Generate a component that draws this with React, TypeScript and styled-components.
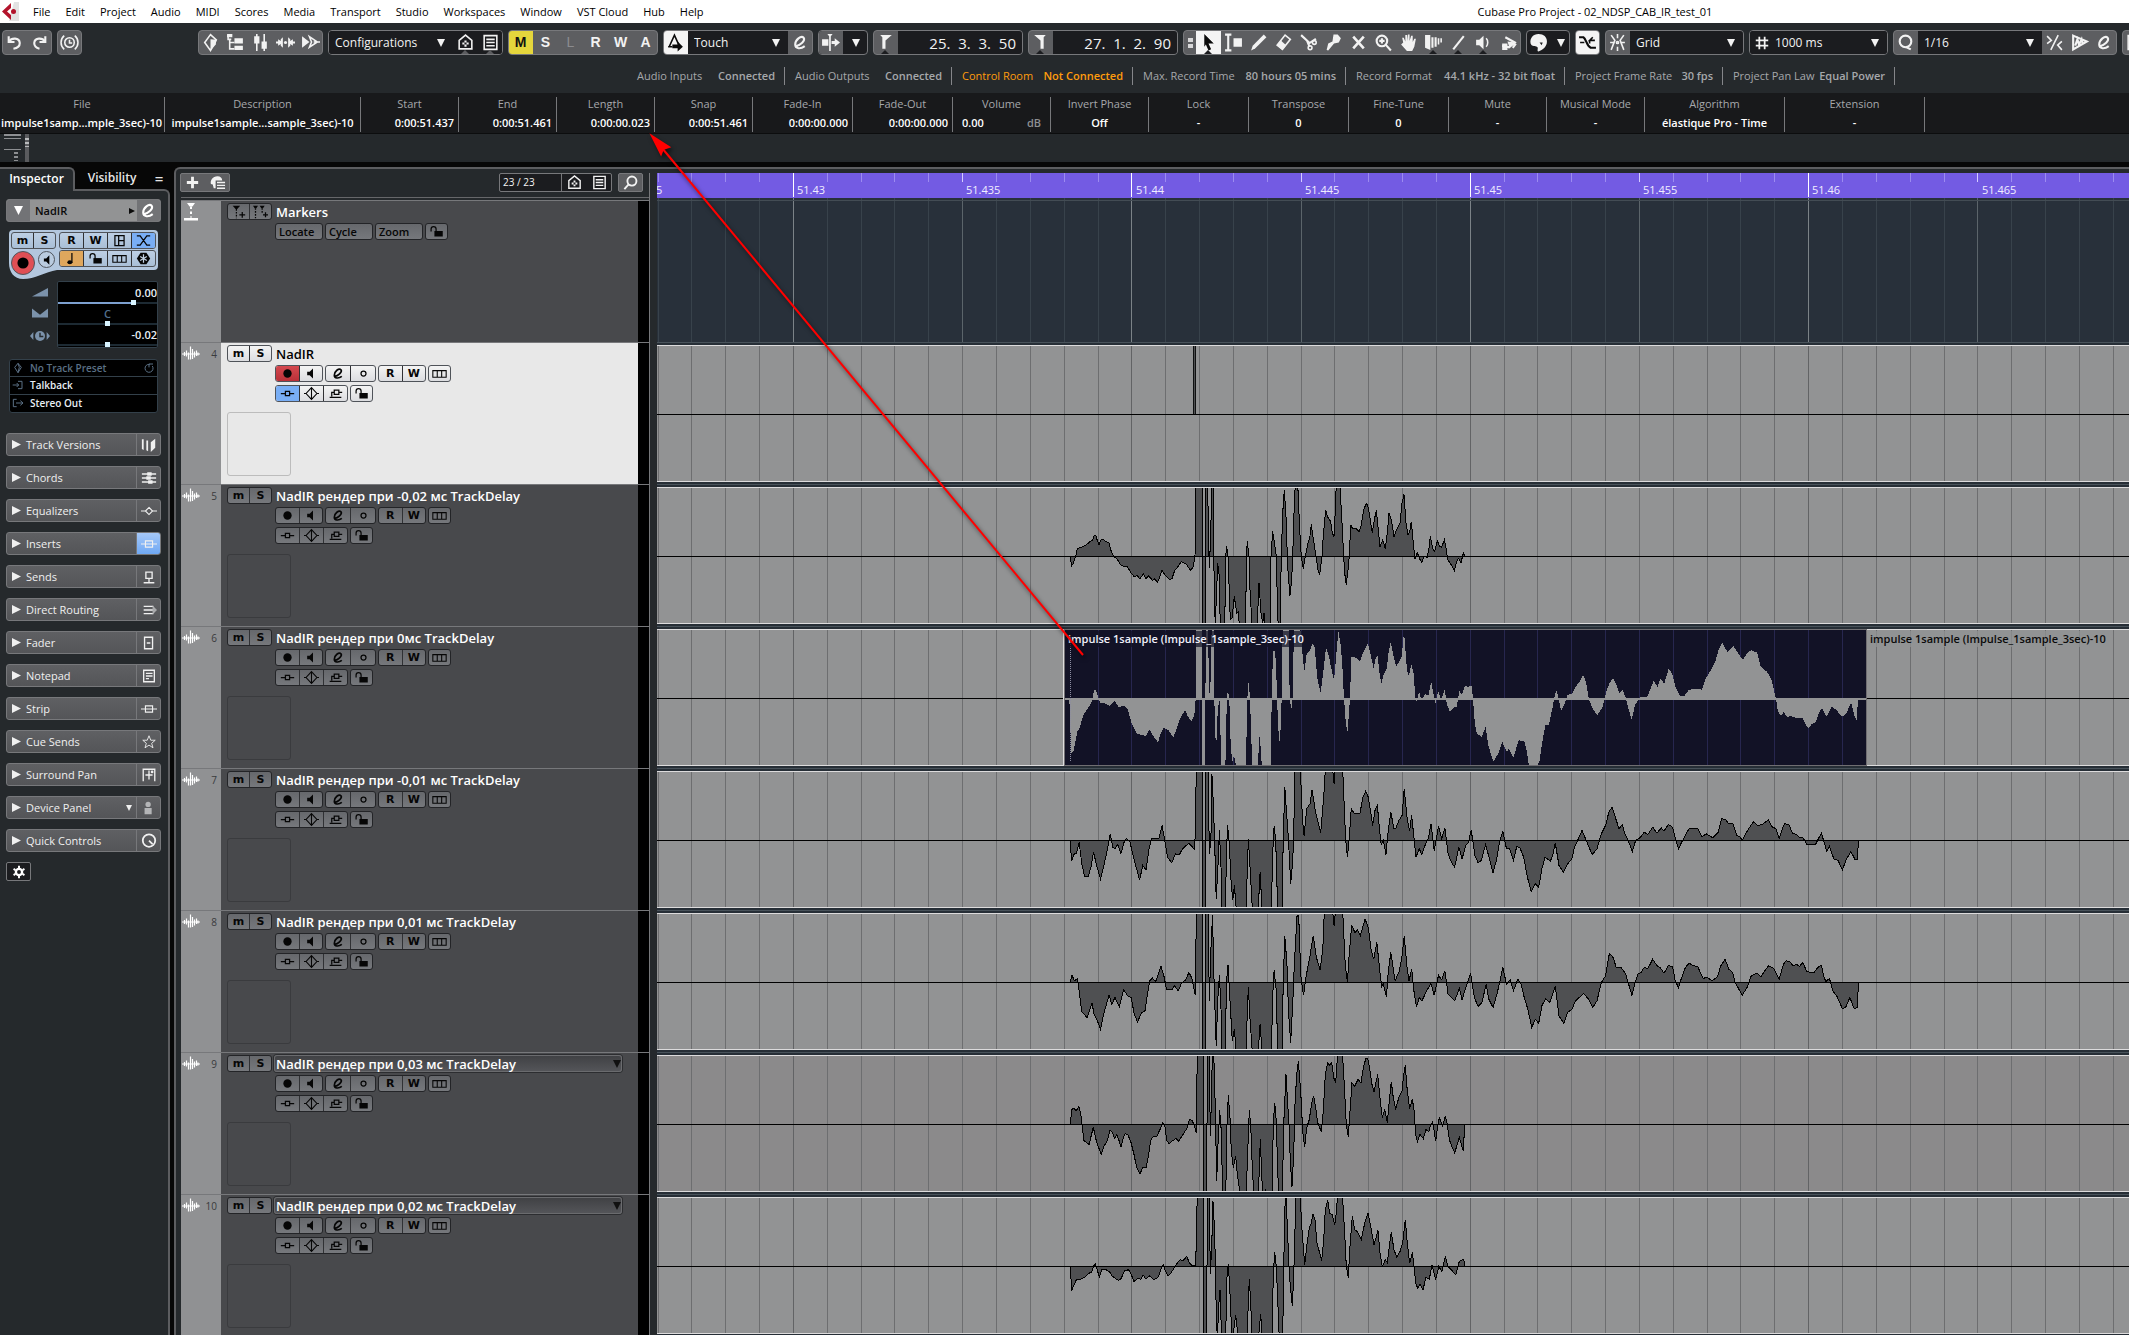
import React from "react";
import styled, { createGlobalStyle, css } from "styled-components";

const UI = `"Open Sans", "Noto Sans", sans-serif`;

const c = {
  panel: "#25292c",
  dark: "#1b1c1f",
  info: "#18191b",
  button: "#5d5e61",
  edge: "#77787b",
  rail: "#909193",
  body: "#48494c",
  clip: "#929394",
  grid: "#6d6e70",
  ruler: "#735be3",
  lane: "#28303a",
  accent: "#79aef5",
};

const Global = createGlobalStyle`
  *, *::before, *::after { box-sizing: border-box; }
  body { margin: 0; background: #070707; font-family: ${UI}; font-size: 11px; line-height: 14px; overflow: hidden; }
  button, input, select { font: inherit; color: inherit; margin: 0; padding: 0; border: 0; background: none; border-radius: 0; }
  svg { display: block; flex: none; }
`;

/* ---------- icons ---------- */

type IconDef = React.ReactNode;
const line = { fill: "none", stroke: "currentColor", strokeWidth: 1.5 };
const thin = { fill: "none", stroke: "currentColor", strokeWidth: 1 };
const solid = { fill: "currentColor" };

const icons: Record<string, IconDef> = {
  undo: <g {...line} strokeWidth={2}><path d="M3.5 3v5.5H9" /><path d="M4 8C6 4.500 13.500 4 14 9.500 14 13 11 14.500 8 15" /></g>,
  redo: <g {...line} strokeWidth={2}><path d="M14.500 3v5.500H9" /><path d="M14 8C12 4.500 4.500 4 4 9.500 4 13 7 14.500 9 15" /></g>,
  clock: <g {...line}><circle cx="9" cy="9" r="4.500" /><path d="M9 6.500V9.500h2.500M4 2.500C0 6 0 12 4 15.500M14 2.500c4 3.500 4 9.500 0 13" /></g>,
  diamond: <g><path {...line} d="M9 1.500 14.500 6.500 9 16.500 3.500 9 9 1.500Z" /><path {...solid} d="M9 6 14.500 6.500 14 11 9 16.500Z" /></g>,
  tree: <g><path {...line} d="M2 2v4h3M3.500 6v9H8M3.500 9H8" /><path {...solid} d="M1 1h5v3H1zM8 5h8v5H8zM8 12h8v4H8z" /></g>,
  mixer: <g><path {...line} d="M5.500 1v16M12.500 1v16" /><path {...solid} d="M3 3h5v7H3zM10 8h5v7h-5z" /></g>,
  spread: <g {...solid}><circle cx="9" cy="9" r="1.500" /><path d="M6.500 4v10L4.500 12V10.500L2 12V10H0V8H2V6l2.500 1.500V6zM11.500 4v10l2-2v-1.500L16 12v-2h2V8h-2V6l-2.500 1.500V6z" /></g>,
  ffwd: <g><path {...solid} d="M1 3l7 5.500L1 14z" /><path {...line} d="M8 3.500 15.500 8.500 8 13.500 10 8.500zM12 8.500h6" /></g>,
  home: <g {...line}><path d="M3 15V7L9 2l6 5v8z" /><path d="M9 7v2M9 11v2M6 10h2M10 10h2" strokeWidth={2} /></g>,
  list: <g {...line}><path d="M3 2.500h12v13H3z" /><path d="M5 6h8M5 9h8M5 12h8" /></g>,
  metro: <g><path {...line} d="M3 13 8 2l4 9M2 13h4" /><path {...solid} d="M6 11h5V8l5 5-5 4.500v-3H6z" /></g>,
  e: <g fill="none" stroke="currentColor" strokeWidth={2}><path d="M4.500 12.500C8 12 14 7.500 12 4.500 9.500 2 4 6.500 4 11c0 4 5 4.500 9 1.500" /></g>,
  autoscroll: <g {...solid}><path d="M1 6h6v6H1zM10 7.500h3V5l5 4-5 4v-2.500h-3zM6 1h5L9.300 3v14h-1.600V3z" /></g>,
  locL: <path {...solid} d="M4 2h11L9 7v8H6V4z" />,
  locR: <path {...solid} d="M14 2H3l6 5v8h3V4z" />,
  pointer: <path {...solid} d="M5 1l9 9h-5l2.500 5.500-2.500 1L6.500 11 5 13z" />,
  range: <g><path {...line} d="M1 1.500h6M1 16.500h6M4 2v14" strokeWidth={2} /><path {...solid} d="M9 5h8v8H9z" /></g>,
  pencil: <path {...solid} d="M14 1.500l2.500 2.500L6 14.500 2 16.500 3.500 12z" />,
  eraser: <g><path {...line} d="M10.500 2 15.500 6 8 15.500 3 11.500z" /><path {...solid} d="M6.500 7 11.500 11.500 8 16 2.500 11.500z" /></g>,
  scissors: <g {...line}><path d="M2 2l8 7.500 6-4M7.500 7 10 13" strokeWidth={2} /><circle cx="14.500" cy="9" r="1.800" /><circle cx="10.500" cy="14" r="1.800" /></g>,
  glue: <path {...solid} d="M9 1.500h4L16 5l-2 4-4.500 1L4 16.500 2.500 16 4 10 8 8z" />,
  cross: <path {...line} strokeWidth={2.500} d="M4 3.500 14 14.500M14 3.500 4 14.500" />,
  zoomin: <g {...line} strokeWidth={2}><circle cx="7.500" cy="7.500" r="5" /><path d="M11 11l5 5.500M5 7.500h5M7.500 5v5" /></g>,
  hand: <path {...solid} d="M4 9 3 4.500h1.500L6 8V2h1.700v5.500L8.500 1.500H10V7.500L11.500 2.500H13V8.500L14.500 5.500H16L14.500 13 12.500 17H7.500L2 11z" />,
  comp: <g {...solid}><path d="M1 2h5v14L1 14zM7 4h2v10H7zM10 4h2v9h-2zM13 5h1.500v6H13zM15.500 5H17v4h-1.500z" /></g>,
  lineTool: <path {...line} strokeWidth={2} d="M4 15.500 14 3" />,
  speaker: <g><path {...solid} d="M2 6.500h3l4-4v13l-4-4H2z" /><path {...line} d="M11.500 5c2 2 2 6 0 8" /></g>,
  fill: <g><path {...line} d="M6 4l9 5-5.500 4.500L3 12M13 14l3-4" strokeWidth={2} /><path {...solid} d="M3 10h5v6H3zM8 8l8 1-6 5z" /></g>,
  palette: <path {...solid} d="M9 1c5 0 8 3 8 7 0 5-4 8-8 9.500C7 17 9.500 14 7.500 13 6 12 3 13.500 1.500 10 .5 5 4 1 9 1zM10 9l3 0-1 2.500z" fillRule="evenodd" />,
  snap: <g><path {...line} strokeWidth={2} d="M1 4h4c3 2 3 8 7 10h5" /><path {...line} d="M2 9h4M16 7h-5l3-3M11 7v3" /></g>,
  star: <g {...line}><path d="M9 1v4M9 13v4M3 2l3.500 5L3 16M15 2l-3.500 5L15 16M2 9h4.500M11.500 9H16" /><circle cx="9" cy="9" r="1" /></g>,
  hash: <path {...line} strokeWidth={2} d="M6 2v14M12 2v14M2 6h14M2 12h14" />,
  q: <g {...line} strokeWidth={2}><circle cx="9" cy="8" r="5.500" /><path d="M9 13l5 2.500" /></g>,
  iter: <g {...line}><path d="M12.500 2 5.500 16M2 3l4 4-4 3M16 8l-4 3.500 4 4.500" /></g>,
  warp: <g {...line} strokeWidth={2}><path d="M3 2.500 16 8 3 15.500zM5 12l2-6 1.500 5L11 6l1 4" /></g>,
  plus: <path {...line} strokeWidth={3} d="M9 3v12M3 9h12" />,
  addPreset: <g><path {...solid} d="M9 2.500c3 0 5 2 5 4.500H7v8H5l-1-4-2-.5C1 7 4 2.500 9 2.500z" /><path {...line} d="M8.500 9H17M8.500 12H17M8.500 15H17" /></g>,
  search: <g {...line} strokeWidth={2}><circle cx="10.500" cy="7.500" r="4.800" /><path d="M7 11l-4.500 5" /></g>,
  versions: <path {...solid} d="M1 2.500h2v12l-2-1zM6 4h2v12l-2-1zM11 6l5-4v10l-5 5z" />,
  chords: <g><path {...line} d="M1 4.500h16M1 9h16M1 13.500h16" /><path {...solid} d="M7 2.500h5v4H7zM6 7h5v4H6zM8 11.500h5v4H8z" /></g>,
  eq: <path {...thin} strokeWidth={1.300} d="M0 9h5M13 9h5M9 5l4 4-4 4-4-4z" />,
  insert: <path {...thin} strokeWidth={1.300} d="M0 9h18M5 5.500h8v7H5z" />,
  send: <path {...line} d="M5.500 3.500h7v7h-7zM9 10.500v5M3 15.500h12" />,
  routing: <g><path {...line} d="M3 5h11M3 9h11M3 13h11" /><path d="M13 4l5 5-5 5z" fill="#a9aaac" /></g>,
  fader: <path {...line} d="M4 2.500h9v13H4zM6.500 9h4" />,
  notepad: <path {...line} d="M3 2.500h12v13H3zM5.500 6H13M5.500 9H13M5.500 12H9" />,
  cue: <path {...thin} d="M9 2l2 5h5l-4 3.500 1.500 5L9 12.500 4.500 15.500 6 10.500 2 7h5z" />,
  surround: <g><path {...line} d="M2.500 16V2.500h13V16M5 9h8M9 4v10" /><circle cx="12.500" cy="5.500" r="1.500" {...solid} /></g>,
  device: <g fill="#b4b5b7"><circle cx="8" cy="5" r="3" /><path d="M4 9h8v7H4z" /></g>,
  quick: <g {...line} strokeWidth={2}><circle cx="9" cy="8.500" r="7" /><path d="M9 8.500l4 4" /></g>,
  gear: <g><circle cx="9" cy="9" r="4" {...line} strokeWidth={3} /><path {...line} strokeWidth={2.500} d="M9 1v3M9 14v3M2 5l2.500 1.500M13.500 11.500 16 13M2 13l2.500-1.500M13.500 6.500 16 5" /></g>,
  rec: <circle cx="9" cy="9" r="5" {...solid} />,
  mon: <path {...solid} d="M5 7h3l4-4v12l-4-4H5z" />,
  ring: <circle cx="9" cy="9" r="3" {...line} />,
  lanes: <path {...thin} strokeWidth={1.300} d="M1 5.500h16v8H1zM6.300 5.500v8M11.600 5.500v8" />,
  chIns: <path {...line} d="M1 9h5.500M11.500 9H17M6.500 6.500h5v5h-5z" />,
  chEq: <path {...thin} strokeWidth={1.300} d="M9 2l6.500 7L9 16 2.500 9zM9 2v14M0 9h3M15 9h3" />,
  chSend: <path {...line} d="M7.500 5h5.500v5H7.500zM13 7.500h4M7.500 7.500h-3v5M2 13.500h14" />,
  lock: <g><path {...line} d="M2.500 9V6c0-4 6-4 6 0v4" /><path {...solid} d="M6.500 8.500h10v6.500h-10z" /></g>,
  marker: <g><path {...solid} d="M2 2h9L7.500 6H5.500z" /><path {...line} strokeDasharray="2 1.500" d="M6.500 6v11" /><path {...line} d="M10 13h7M13.500 9.500v7" /></g>,
  markers: <g><path {...solid} d="M0 2h6L4 5H2zM8 2h6l-2 3h-2z" /><path {...line} strokeDasharray="2 1.500" d="M3 5v12M11 5v7" /><path {...line} d="M12 13h6M15 10v6" /></g>,
  markerTrack: <g><path {...solid} d="M5 0h8L10.500 3.500h-3zM2 15h14v2.500H2z" /><path {...line} strokeWidth={2} strokeDasharray="2.500 2.500" d="M9 3.500v11" /></g>,
  grid4: <path {...line} d="M3.500 3h11v12h-11zM8 3v12M8 9h6.500" />,
  xfade: <path {...line} d="M1 3.500h4l8 11h4M1 14.500h4l8-11h4" />,
  note: <g><ellipse cx="7" cy="13.500" rx="3" ry="2.500" {...solid} /><path {...line} d="M9.500 14V2.500" /></g>,
  freeze: <g><path {...solid} d="M5.500 2h7L17 9l-4.500 7h-7L1 9z" /><path stroke="#c3d2e2" strokeWidth={1.500} d="M9 4v10M5 6.500l8 5M13 6.500l-8 5" /></g>,
  volume: <path {...solid} d="M0 14 18 4.500V14z" />,
  pan: <path {...solid} d="M0 4l9 7 9-7v10H0z" />,
  delay: <g {...solid}><path d="M0 9l3-3.500v7zM18 9l-3-3.500v7z" /><circle cx="9" cy="9" r="4.500" /><path d="M9 6v3.500h3" stroke={c.panel} strokeWidth={1.300} fill="none" /></g>,
  preset: <path {...line} d="M9 2l5 6-5 8-5-8zM9 2l2 6-2 8" />,
  inPort: <path {...line} d="M1 9h9M7 6l3 3-3 3M9 3.500h6v11H9" />,
  outPort: <path {...line} d="M7 3.500H2v11h5M6 9h10M12.500 5.500l4 3.500-4 3.500" />,
  reload: <g {...line}><path d="M14 6a6 6 0 1 1-4-2.500" /><path d="M9 8V3h6" /></g>,
  wave: <path fill="none" stroke="currentColor" strokeWidth={1.200} d="M0 9h18M2.500 7v4M4.500 5.500v6M6.500 7.500v7M8.500 1.500v13M10.500 4v10M12.500 6.500v6M14.500 5.500v5.500M16 7.500v3" />,
};

const Icon = ({ name, size = 16 }: { name: string; size?: number }) => (
  <svg width={size} height={size} viewBox="0 0 18 18" aria-hidden="true">{icons[name]}</svg>
);

const Tri = ({ dir, size = 8 }: { dir: "down" | "right"; size?: number }) => (
  <svg width={size} height={size} viewBox="0 0 8 8" aria-hidden="true">
    <path d={dir === "down" ? "M0 0h8L4 8z" : "M0 0v8l8-4z"} fill="currentColor" />
  </svg>
);

/* ---------- page frame ---------- */

const Page = styled.div`
  display: flex;
  flex-direction: column;
  height: 100vh;
  overflow: hidden;
  position: relative;
`;

const MenuBar = styled.header`
  display: grid;
  grid-template-columns: 69.4% 1fr;
  align-items: center;
  height: 23px;
  background: #fff;
  color: #000;
`;

const Menu = styled.nav`
  display: flex;
  align-items: center;
`;

const Logo = styled.svg`
  margin-right: 7px;
`;

const MenuItem = styled.button`
  padding: 0 8px 0 7px;
  height: 23px;
`;

const Title = styled.h1`
  margin: 0;
  font-size: 11px;
  font-weight: 400;
  white-space: nowrap;
`;

const Toolbar = styled.div`
  display: flex;
  flex: none;
  gap: 5px;
  height: 37px;
  padding: 7px 0 5px 2px;
  background: ${c.panel};
  color: #f2f2f2;
  overflow: hidden;
`;

const Spacer = styled.div`
  width: 106px;
  flex: none;
`;

const Group = styled.div<{ $dark?: boolean }>`
  display: flex;
  flex: none;
  height: 25px;
  border: 1px solid ${c.edge};
  border-radius: 4px;
  overflow: hidden;
  background: ${(p) => (p.$dark ? c.dark : c.button)};
`;

const Tool = styled.button<{ $tone?: "on" | "mute" | "dim" | "dark" | "grey"; $notch?: boolean; $w?: number }>`
  position: relative;
  display: flex;
  align-items: center;
  justify-content: center;
  flex: 0 0 ${(p) => p.$w ?? 25}px;
  height: 23px;
  font: 700 14px/23px "Liberation Sans", sans-serif;
  &:first-child { margin-left: -1px; }
  &:last-child { margin-right: -1px; }
  ${(p) => p.$tone === "on" && css`background: #f4f4f4; color: #0b0b0b;`}
  ${(p) => p.$tone === "mute" && css`background: #e5d63c; color: #111;`}
  ${(p) => p.$tone === "dim" && css`color: #8b8c8f; font-weight: 400;`}
  ${(p) => p.$tone === "dark" && css`background: ${c.dark};`}
  ${(p) => p.$tone === "grey" && css`background: ${c.button};`}
  ${(p) => p.$notch && css`
    &::after {
      content: "";
      position: absolute;
      bottom: 0;
      left: 8px;
      border: 4px solid transparent;
      border-top: 0;
      border-bottom-color: ${p.$tone === "dark" ? "#5c5d60" : "#1c1d20"};
    }
  `}
`;

const PickBox = styled.label<{ $w: number }>`
  display: grid;
  grid-template-columns: 1fr 16px;
  align-items: center;
  width: ${(p) => p.$w}px;
  background: ${c.dark};
  > select { grid-area: 1 / 1 / 2 / 3; }
  > svg { grid-area: 1 / 2; pointer-events: none; }
`;

const Select = styled.select<{ $pad: number }>`
  appearance: none;
  width: 100%;
  height: 23px;
  padding-left: ${(p) => p.$pad}px;
  font-size: 12px;
  outline: none;
`;

const Pick = ({ label, value, width, pad = 6 }: { label: string; value: string; width: number; pad?: number }) => (
  <PickBox $w={width}>
    <Select $pad={pad} aria-label={label} defaultValue={value}><option>{value}</option></Select>
    <Tri dir="down" size={8} />
  </PickBox>
);

const Position = styled.input`
  width: 124px;
  padding-right: 6px;
  background: ${c.dark};
  font-size: 15px;
  text-align: right;
`;

const T = ({ icon, label, size = 19, ...rest }: { icon: string; label: string; size?: number; $tone?: any; $notch?: boolean; $w?: number }) => (
  <Tool aria-label={label} {...rest}><Icon name={icon} size={size} /></Tool>
);

/* ---------- status and info lines ---------- */

const StatusLine = styled.div`
  display: flex;
  align-items: center;
  height: 33px;
  padding: 0 0 1px 627px;
  flex: none;
  background: ${c.panel};
`;

const Status = styled.div<{ $w: number; $warn?: boolean }>`
  display: flex;
  align-items: center;
  justify-content: space-between;
  width: ${(p) => p.$w}px;
  height: 18px;
  padding: 0 9px 0 10px;
  border-right: 1px solid #85868a;
  color: ${(p) => (p.$warn ? "#ff9c0c" : "#a6a8ab")};
  white-space: nowrap;
  > b { font-weight: 600; }
`;

const InfoLine = styled.div`
  display: flex;
  height: 41px;
  padding-top: 4px;
  flex: none;
  background: ${c.info};
  border-bottom: 1px solid #0c0d0e;
`;

const Info = styled.div<{ $w: number; $align: "left" | "center" | "right" | "split" }>`
  width: ${(p) => p.$w}px;
  height: 35px;
  border-right: 1px solid #77787b;
  color: #a6a8ab;
  text-align: center;
  white-space: nowrap;
  > p {
    display: flex;
    justify-content: ${(p) => ({ left: "flex-start", center: "center", right: "flex-end", split: "space-between" })[p.$align]};
    margin: 5px 0 0;
    padding: 0 ${(p) => (p.$align === "split" ? 9 : p.$align === "left" ? 1 : 4)}px;
    color: #fff;
    font-weight: 600;
  }
  small { color: #8e9093; font-size: 11px; }
`;

const Overview = styled.div`
  height: 28px;
  margin-bottom: 5px;
  flex: none;
  background: ${c.panel};
`;

/* ---------- main area ---------- */

const Main = styled.main`
  display: flex;
  flex: 1;
  min-height: 0;
  gap: 4px;
  background: #070707;
`;

const Inspector = styled.aside`
  display: flex;
  flex-direction: column;
  width: 170px;
  flex: none;
`;

const Tabs = styled.div`
  display: flex;
  height: 22px;
  color: #e6e6e6;
  font-weight: 600;
  font-size: 12px;
`;

const Tab = styled.button<{ $active?: boolean }>`
  width: 74px;
  ${(p) => p.$active && css`
    position: relative;
    width: 75px;
    height: 24px;
    padding-bottom: 2px;
    border: solid #5c5d60;
    border-width: 2px 2px 0 0;
    border-radius: 0 6px 0 0;
    background: ${c.panel};
    color: #fff;
  `}
`;

const TabMenu = styled.button`
  width: 20px;
  font-size: 15px;
`;

const InspectorBody = styled.div`
  display: flex;
  flex-direction: column;
  flex: 1;
  padding: 8px 7px 0 6px;
  border: solid #5c5d60;
  border-width: 2px 2px 0 0;
  border-radius: 0 6px 0 0;
  background: ${c.panel};
`;

const TrackHead = styled.div`
  display: flex;
  width: 155px;
  height: 23px;
  flex: none;
  border: 1px solid ${c.edge};
  border-radius: 3px;
  overflow: hidden;
  background: ${c.clip};
`;

const HeadButton = styled.button`
  display: flex;
  align-items: center;
  justify-content: center;
  width: 23px;
  background: #727376;
  color: #fff;
`;

const HeadName = styled.button`
  display: flex;
  flex: 1;
  align-items: center;
  justify-content: space-between;
  padding: 0 2px 0 5px;
  color: #0a0a0a;
  font-weight: 600;
`;

const Strip = styled.div`
  display: grid;
  grid-template-columns: 45px 97px;
  column-gap: 3px;
  position: relative;
  width: 149px;
  height: 49px;
  margin: 8px 0 0 3px;
  padding: 2px;
  flex: none;
`;

const StripShape = styled.svg`
  position: absolute;
  inset: 0;
`;

const StripCol = styled.div`
  position: relative;
  display: flex;
  flex-direction: column;
  gap: 1px;
`;

const Rounds = styled.div`
  display: flex;
  gap: 3px;
`;

const Round = styled.button<{ $rec?: boolean }>`
  display: flex;
  align-items: center;
  justify-content: center;
  width: ${(p) => (p.$rec ? 24 : 17)}px;
  height: ${(p) => (p.$rec ? 24 : 17)}px;
  margin-top: 1px;
  border: 1px solid #50565e;
  border-radius: 50%;
  background: ${(p) => (p.$rec ? "#df4f55" : "#b9cbdf")};
  color: #000;
`;

const Cells = styled.div<{ $look: "dark" | "light" | "blue" }>`
  display: flex;
  flex: none;
  height: 17px;
  border: 1px solid ${(p) => (p.$look === "dark" ? "#232427" : "#4f5359")};
  border-radius: 3px;
  overflow: hidden;
  color: #060606;
  background: ${(p) => ({ dark: "linear-gradient(#66686c, #76787c)", light: "linear-gradient(#f4f4f4, #dcdde0)", blue: "linear-gradient(#bdcfe4, #a9bfd6)" })[p.$look]};
`;

const Cell = styled.button<{ $fill?: string; $split?: boolean }>`
  display: flex;
  flex: 1;
  align-items: center;
  justify-content: center;
  background: ${(p) => p.$fill ?? "none"};
  font: 700 11px/15px "DejaVu Sans", sans-serif;
  ${(p) => p.$split && css`& + & { border-left: 1px solid #303134; }`}
`;

const Faders = styled.div`
  display: flex;
  gap: 8px;
  margin: 2px 0 0 24px;
  flex: none;
`;

const FaderIcons = styled.div`
  display: flex;
  flex-direction: column;
  gap: 5px;
  padding-top: 3px;
  width: 19px;
  align-items: center;
  color: #7b92ab;
`;

const FaderBox = styled.div`
  width: 101px;
  height: 67px;
  padding: 2px 0 0;
  border: 1px solid #33404a;
  border-radius: 2px;
  background: #000;
`;

const FaderRow = styled.label<{ $center?: boolean }>`
  display: grid;
  grid-template-rows: 16px 5px;
  color: ${(p) => (p.$center ? "#53708f" : "#e9eff5")};
  font-weight: 600;
  line-height: 17px;
  text-align: ${(p) => (p.$center ? "center" : "right")};
`;

const Slider = styled.input<{ $filled?: boolean }>`
  appearance: none;
  width: 99px;
  height: 5px;
  background: linear-gradient(${(p) => (p.$filled ? "90deg, #7da0cf 77%, #1d2a33 77%" : "#1d2a33, #1d2a33")}) center / 100% 2px no-repeat;
  &::-webkit-slider-thumb {
    appearance: none;
    width: 5px;
    height: 5px;
    background: #d8f4ff;
  }
`;

const Routing = styled.div`
  width: 149px;
  height: 54px;
  margin: 11px 0 20px 3px;
  flex: none;
  border: 1px solid #33404a;
  border-radius: 3px;
  background: #000;
`;

const Route = styled.button<{ $dim?: boolean }>`
  display: flex;
  align-items: center;
  gap: 6px;
  width: 100%;
  height: 18px;
  padding: 0 2px 1px;
  color: ${(p) => (p.$dim ? "#5b7085" : "#e9eff5")};
  font-size: 10px;
  font-weight: 600;
  &:first-child { height: 16px; }
  & + & { border-top: 1px solid #33404a; }
  > svg { color: #5b7085; }
  > span { flex: 1; text-align: left; }
`;

const Sections = styled.div`
  display: flex;
  flex-direction: column;
  gap: 10px;
`;

const Section = styled.div`
  display: flex;
  width: 155px;
  height: 23px;
  border: 1px solid ${c.edge};
  border-radius: 3px;
  overflow: hidden;
  background: linear-gradient(#5f6063, #545558);
  color: #f0f0f0;
`;

const SectionName = styled.button`
  display: flex;
  flex: 1;
  align-items: center;
  gap: 5px;
  padding: 0 4px 0 5px;
  > span { flex: 1; text-align: left; }
`;

const SectionIcon = styled.button<{ $on?: boolean }>`
  display: flex;
  align-items: center;
  justify-content: center;
  width: 24px;
  border-left: 1px solid ${c.edge};
  background: ${(p) => (p.$on ? "linear-gradient(#a5c8f8, #6fa8f4)" : "none")};
`;

const Gear = styled.button`
  display: flex;
  align-items: center;
  justify-content: center;
  width: 25px;
  height: 19px;
  border: 1px solid ${c.edge};
  border-radius: 2px;
  background: ${c.dark};
  color: #fff;
`;

const Workspace = styled.section`
  display: flex;
  flex: 1;
  min-width: 0;
  padding-left: 5px;
  border: solid #5c5d60;
  border-width: 2px 0 0 2px;
  border-radius: 6px 0 0 0;
  background: ${c.panel};
`;

/* ---------- track list ---------- */

const TrackList = styled.div`
  width: 469px;
  margin: 4px 7px 0 0;
  flex: none;
  border-right: 1px solid ${c.edge};
`;

const ListHead = styled.div`
  display: flex;
  gap: 6px;
  height: 25px;
  padding-right: 6px;
  color: #f2f2f2;
  border-bottom: 1px solid #66676a;
  > :first-child { margin: 0 auto 0 -1px; }
`;

const HeadGroup = styled(Group)`
  height: 19px;
  border-radius: 2px;
  > button { height: 17px; }
`;

const Count = styled.output`
  width: 62px;
  padding-left: 3px;
  border-right: 1px solid ${c.edge};
  font-size: 10px;
  line-height: 17px;
`;

const Row = styled.article<{ $first?: boolean }>`
  display: grid;
  grid-template-columns: 40px 1fr 11px;
  height: 142px;
  margin-top: ${(p) => (p.$first ? 2 : 0)}px;
  border-top: 1px solid ${c.edge};
  background: #000;
`;

const Rail = styled.div`
  display: flex;
  justify-content: space-between;
  padding: 2px 4px 0 1px;
  background: ${c.rail};
  color: #3a3b3d;
  font-size: 10px;
  line-height: 18px;
  > svg { color: #fff; }
`;

const RowBody = styled.div<{ $selected?: boolean }>`
  display: grid;
  grid-template-columns: 45px 1fr;
  grid-template-rows: 17px 17px 17px auto;
  gap: 3px;
  padding: 2px 16px 0 6px;
  background: ${(p) => (p.$selected ? "#e8e8e8" : c.body)};
  color: ${(p) => (p.$selected ? "#000" : "#fff")};
`;

const Name = styled.h2<{ $boxed?: boolean }>`
  display: flex;
  justify-content: space-between;
  align-items: center;
  margin: 0 0 0 -1px;
  padding-left: 2px;
  border-radius: 3px;
  font-size: 13px;
  font-weight: 600;
  line-height: 16px;
  white-space: nowrap;
  > svg { color: #111; }
  ${(p) => p.$boxed && css`
    box-shadow: 0 0 0 1px #2c2d30, inset 0 0 0 1px #6a6b6e;
    background: linear-gradient(#3f4043, #55565a);
    padding-right: 1px;
  `}
`;

const Controls = styled.div`
  display: flex;
  grid-column: 2;
  gap: 2px;
`;

const Sized = styled(Cells)<{ $w: number }>`
  width: ${(p) => p.$w}px;
`;

const MarkerButton = styled(Cell)`
  justify-content: flex-start;
  padding-left: 3px;
  font: 600 11px/15px ${UI};
`;

const Picture = styled.div<{ $selected?: boolean }>`
  grid-column: 1 / 3;
  width: 64px;
  height: 64px;
  margin-top: 7px;
  border: 1px solid ${(p) => (p.$selected ? "#bcbcbc" : "#3a3b3e")};
  border-radius: 3px;
`;

/* ---------- timeline ---------- */

const Timeline = styled.div`
  display: flex;
  flex-direction: column;
  flex: 1;
  min-width: 0;
  padding-top: 4px;
`;

const Canvas = styled.svg<{ $h: number }>`
  width: 100%;
  height: ${(p) => p.$h}px;
`;

const RulerBar = styled.div`
  height: 25px;
  flex: none;
  overflow: hidden;
  background: ${c.ruler};
`;

const MarkerLane = styled.div`
  height: 144px;
  flex: none;
  background: ${c.lane};
`;

const Lane = styled.div`
  display: flex;
  height: 142px;
  flex: none;
  padding: 2px 0;
  border-top: 1px solid #48525a;
  background: #262e36;
`;

const ClipBox = styled.div<{ $w?: number; $look: "plain" | "tinted" | "selected" }>`
  display: grid;
  flex: ${(p) => (p.$w ? `0 0 ${p.$w}px` : "1 1 0")};
  min-width: 0;
  height: 137px;
  overflow: hidden;
  border: solid ${(p) => (p.$look === "selected" ? "#706e72" : "#dcdbdc")};
  border-width: 1px ${(p) => (p.$w ? 1 : 0)}px 1px ${(p) => (p.$look === "selected" ? 1 : 0)}px;
  background: ${(p) => ({ plain: c.clip, tinted: "#8b8a8b", selected: "#121226" })[p.$look]};
  > * { grid-area: 1 / 1; }
`;

const ClipName = styled.span<{ $selected?: boolean }>`
  align-self: start;
  justify-self: start;
  padding: 0 3px;
  margin-top: 1px;
  background: ${(p) => (p.$selected ? "rgba(18, 18, 38, 0.7)" : "rgba(146, 147, 148, 0.7)")};
  color: ${(p) => (p.$selected ? "#f0f0fa" : "#0a0a0a")};
  font-weight: 600;
  line-height: 16px;
  white-space: nowrap;
`;

const Arrow = styled.svg`
  position: absolute;
  top: 0;
  left: 0;
  pointer-events: none;
`;

const GRID = 33.84;
const ticks = Array.from({ length: 44 }, (_, k) => ({ x: Math.round(0.6 + k * GRID), major: (k + 6) % 10 === 0, mid: (k + 1) % 5 === 0 }));
const labels = ["51.425", "51.43", "51.435", "51.44", "51.445", "51.45", "51.455", "51.46", "51.465"];

/* sample peaks as "x,level" pairs measured from the first event's origin */
const waves = {
  t5: "90,0 95,-27 99,-22 107,0 112,24 125,28 140,36 150,45 158,50 163,63 168,62 172,48 177,35 183,50 190,50 200,44 207,40 213,18 221,0 232,-8 244,-28 262,-30 272,-48 282,-60 292,-58 300,-67 310,-52 318,-66 326,-58 338,-72 343,-66 352,-77 358,-66 366,-42 376,-56 390,-70 396,-66 404,-42 414,-30 424,-15 438,-22 452,-42 460,-30 465,0 467,205 486,205 486,-205 495,-205 495,0 498,205 503,205 505,90 508,-33 512,60 515,205 519,205 521,0 526,-205 528,-150 533,-20 538,-60 541,-205 554,-205 557,0 560,30 564,0 571,-190 576,-185 583,-120 590,-170 596,-165 598,-205 617,-205 619,0 622,45 627,0 630,-100 637,-205 651,-205 657,-80 663,-170 668,-200 672,-170 675,-205 690,-205 693,0 698,75 705,30 709,0 712,-130 715,-205 720,-205 724,0 728,130 733,200 738,120 742,0 745,-60 750,-117 755,-70 758,0 762,130 766,205 773,205 779,80 784,0 790,-36 796,0 804,40 809,55 814,96 819,60 825,20 828,0 834,-40 839,-55 846,0 849,50 854,110 857,140 862,120 872,105 877,70 882,60 886,140 889,205 899,205 905,120 911,0 914,-50 919,-85 924,-40 928,0 932,95 937,85 948,85 957,74 964,95 971,140 979,160 984,150 991,110 997,70 1003,110 1009,138 1014,90 1020,28 1028,50 1036,24 1042,70 1047,130 1054,110 1062,60 1072,85 1080,100 1086,160 1092,186 1098,100 1104,65 1109,75 1114,104 1119,50 1125,-8 1132,12 1138,-5 1145,-18 1152,0 1162,-2 1168,30 1171,60 1178,25 1184,14 1192,47 1199,30 1205,28 1213,50 1219,20 1223,-10 1234,-25 1243,-42 1250,-15 1256,-5 1263,-20 1270,12 1274,0",
  t6: "88,0 94,-165 100,-160 112,-100 120,-85 130,-50 145,-28 157,-8 162,25 168,24 176,0 180,-12 195,-15 208,-22 224,-8 236,-25 255,-22 264,-35 275,-75 290,-105 305,-110 318,-112 328,-92 338,-110 354,-132 360,-110 370,-88 385,-95 400,-117 408,-95 418,-65 426,-48 436,-36 444,-55 455,-68 463,-50 467,0 469,205 486,205 486,-205 496,-205 496,0 499,205 503,205 506,100 509,0 512,60 515,205 521,205 523,0 528,-165 532,-60 535,-30 538,15 543,-160 545,-205 556,-205 559,-60 563,28 568,0 572,-140 577,-190 582,-170 587,-195 596,-205 616,-205 620,-100 622,0 626,53 630,0 634,-120 638,-205 652,-205 659,-105 664,-180 668,-205 692,-205 695,0 699,140 703,148 708,110 711,0 716,-110 720,-137 725,0 728,205 746,205 749,0 754,-35 758,0 762,205 780,205 785,160 793,80 800,135 810,145 818,165 824,155 832,60 842,16 850,80 858,152 866,130 874,90 882,55 888,120 895,202 902,160 907,100 912,0 918,-80 923,-100 927,-40 930,0 934,126 950,122 960,110 968,135 984,165 992,130 1001,90 1008,125 1013,128 1018,80 1024,45 1032,75 1040,90 1046,140 1052,170 1060,130 1068,97 1078,110 1085,125 1092,202 1099,110 1104,65 1109,78 1114,102 1121,75 1126,0 1130,-8 1137,20 1146,-8 1155,15 1165,8 1174,50 1181,10 1186,-15 1195,22 1204,-6 1214,28 1221,-20 1230,-40 1240,-28 1250,-25 1258,22 1266,12 1275,38 1284,35 1295,38 1299,0 1304,-70 1310,-105 1325,-115 1337,-85 1345,-140 1352,-165 1360,-190 1375,-165 1387,-130 1400,-160 1407,-150 1420,-178 1436,-125 1453,-128 1461,-160 1469,-205 1486,-205 1499,-185 1507,-130 1516,-80 1527,-78 1539,-20 1542,0 1549,25 1556,0 1563,-37 1572,-20 1582,10 1596,15 1610,40 1622,55 1629,70 1638,50 1646,0 1658,-30 1672,-50 1688,-25 1699,20 1709,48 1719,60 1728,45 1738,15 1748,25 1758,0 1768,-40 1775,-62 1785,-20 1800,5 1822,6 1841,53 1853,35 1861,60 1873,45 1886,90 1896,75 1908,30 1920,8 1933,8 1947,26 1973,30 1986,26 1997,60 2016,90 2026,110 2037,150 2047,167 2062,140 2080,158 2092,140 2109,115 2120,135 2133,145 2151,138 2162,95 2181,80 2195,55 2205,10 2208,0 2214,-40 2224,-52 2231,-40 2242,-57 2252,-52 2267,-58 2288,-60 2298,-80 2305,-90 2314,-78 2327,-70 2338,-40 2347,-30 2360,-55 2374,-25 2388,-33 2406,-55 2419,-45 2433,-12 2443,-50 2450,-65 2454,0",
  t7: "56,0 59,-60 64,-40 68,-38 73,-5 78,-70 83,-107 90,-108 95,-80 100,-35 105,-70 113,-115 120,-70 126,-25 131,20 136,-20 140,-25 145,-12 151,-40 157,-5 161,6 168,-5 176,-60 186,-118 192,-75 198,-88 203,-30 208,5 218,6 222,5 228,45 233,0 238,-50 246,-67 253,-40 260,-43 266,-25 278,-8 289,-28 292,205 303,205 303,-204 309,-204 310,205 314,205 316,-40 319,0 321,200 324,100 326,0 329,-175 332,-90 335,30 338,-80 340,-204 346,-204 348,-50 350,45 353,0 357,-130 360,-178 363,-135 367,-204 385,-204 387,-80 389,3 392,-80 397,-204 407,-204 411,-95 415,-204 432,-204 434,-50 437,42 440,0 444,-204 452,-204 454,0 457,160 461,70 464,0 468,-130 472,-60 474,50 476,205 486,205 490,60 493,15 498,95 504,110 508,152 514,90 519,55 524,22 530,140 533,205 546,205 549,170 551,205 565,205 569,60 571,0 574,-50 577,0 581,95 587,80 597,80 603,130 608,148 613,130 618,80 621,45 626,95 630,105 634,30 637,-12 641,0 646,-42 650,30 655,85 661,35 664,35 670,60 676,75 680,155 686,60 690,30 694,75 698,10 702,-50 708,-25 713,-42 720,-10 725,5 730,50 736,-30 744,42 750,5 756,38 762,-40 768,-65 774,-80 782,-20 788,-55 795,-15 800,-5 805,32 812,-45 818,-67 824,-60 832,-12 840,-60 846,-97 852,-60 858,-5 864,28 871,-25 877,-25 884,-60 890,-18 896,-22 903,-50 910,-110 917,-152 925,-130 931,-140 937,-85 943,-50 953,-62 958,-40 962,-8 969,-75 977,-95 985,-70 993,-55 998,-20 1005,5 1012,30 1020,0 1025,-20 1031,-42 1040,-25 1048,20 1056,45 1062,85 1068,100 1074,70 1081,35 1087,48 1092,20 1098,0 1106,-33 1112,0 1120,8 1128,25 1135,18 1144,40 1152,22 1160,38 1165,28 1173,48 1181,40 1187,0 1192,-25 1198,-5 1206,20 1212,36 1228,36 1236,12 1244,20 1256,8 1266,25 1273,66 1280,62 1286,50 1293,52 1301,15 1307,10 1311,0 1318,22 1327,45 1332,56 1340,45 1348,48 1360,62 1366,42 1374,35 1380,5 1386,35 1390,50 1398,48 1405,22 1412,18 1418,8 1424,10 1432,-12 1448,-12 1453,5 1459,22 1463,0 1469,-32 1474,-18 1482,-55 1490,-60 1498,-88 1506,-55 1514,-33 1522,-58 1526,-58 1528,0",
  t8: "56,0 60,22 64,5 70,12 74,-35 78,-88 88,-105 92,-85 97,-62 101,-95 106,-110 113,-140 118,-100 124,-65 129,-38 134,-65 140,-45 148,-73 156,-22 164,-40 170,-45 176,-95 182,-118 190,-90 196,-85 201,-30 205,5 210,13 216,3 226,48 232,15 236,-20 246,-22 251,-10 258,-25 264,-3 272,8 278,30 283,15 290,-38 292,205 303,205 303,-204 309,-204 310,205 314,205 316,-55 319,100 322,202 325,0 329,-190 332,-50 335,22 338,-80 340,-204 346,-204 348,0 351,52 355,-60 359,-175 363,-140 367,-204 385,-204 387,-80 389,-15 392,-110 397,-204 407,-204 411,-125 415,-204 432,-204 434,-50 437,36 441,-20 444,-204 452,-204 454,0 457,138 461,60 464,-90 468,-180 472,-60 475,60 480,202 483,200 487,20 492,-38 497,20 504,80 510,140 516,75 523,38 528,100 531,205 546,205 549,170 552,205 565,205 570,50 574,0 577,80 582,172 588,150 593,158 598,140 607,190 613,165 618,100 623,70 629,120 634,40 638,-12 641,-5 647,-42 650,30 655,90 663,5 671,35 676,80 680,138 685,50 689,5 694,40 698,-25 703,-73 708,-45 713,-55 722,-25 730,-3 736,-38 744,22 750,8 756,35 762,-35 774,-55 783,-18 788,-52 795,-15 804,28 811,-45 818,-72 825,-60 833,-5 838,-50 846,-75 853,-35 859,5 864,45 871,-5 878,8 884,-25 892,10 898,-5 905,-50 911,-80 918,-135 925,-110 931,-122 937,-70 944,-48 952,-60 958,-30 962,-12 969,-100 978,-122 985,-90 993,-80 1000,-55 1015,-33 1024,-50 1032,-75 1040,-55 1048,0 1056,20 1063,88 1070,75 1076,45 1085,45 1093,28 1099,-5 1105,-38 1111,0 1116,25 1122,30 1128,45 1135,42 1144,70 1152,50 1158,45 1165,28 1173,50 1181,48 1186,5 1192,-15 1197,10 1205,45 1212,58 1220,50 1228,48 1238,12 1245,16 1255,5 1265,18 1271,50 1279,70 1286,40 1293,30 1298,0 1311,-38 1320,-15 1328,20 1338,28 1346,18 1360,50 1370,42 1380,10 1388,55 1393,65 1400,62 1406,50 1412,55 1418,48 1424,60 1432,32 1445,30 1452,45 1459,52 1463,20 1467,3 1474,12 1480,-25 1488,-42 1498,-78 1504,-75 1512,-45 1520,-78 1526,-75 1528,0",
  t9: "91,0 95,45 102,50 108,40 116,54 122,35 126,0 132,-48 140,-55 148,-60 152,-40 160,-8 168,-45 176,-70 184,-90 192,-65 202,-48 210,-16 216,-22 224,-42 230,-30 236,-45 243,-68 250,-40 256,-27 264,-32 272,-50 282,-90 290,-130 300,-148 308,-130 318,-130 326,-90 332,-48 340,-35 350,-36 360,-15 368,5 374,0 380,-48 388,-58 396,-50 408,-42 416,-50 424,-38 434,-22 442,-10 448,15 456,12 462,0 469,-25 472,205 489,205 489,-205 499,-205 501,0 503,205 508,205 511,-35 515,100 517,205 521,205 526,50 530,-170 534,-60 539,42 544,-20 548,-205 557,-205 561,0 565,88 570,20 574,-80 580,-130 587,-95 592,-150 602,-205 618,-205 624,-60 628,42 632,0 637,-130 642,-205 655,-205 661,-45 666,-170 670,-205 676,-195 680,-205 696,-205 700,0 704,65 709,10 712,-100 716,-205 727,-205 731,0 738,150 743,60 747,0 751,-110 756,-187 761,-90 765,60 770,150 775,190 782,100 788,-20 794,-68 800,-10 808,15 815,65 821,86 827,50 833,5 839,-10 844,-22 850,40 856,150 863,185 869,178 875,187 881,140 887,125 890,170 893,205 907,205 913,120 919,0 925,-38 930,40 936,125 944,115 954,135 963,125 970,170 978,200 984,195 990,160 996,120 1002,98 1013,150 1020,80 1027,20 1034,45 1042,5 1048,70 1054,128 1060,80 1067,45 1076,80 1086,100 1091,150 1096,177 1102,100 1109,48 1117,76 1122,45 1127,-30 1132,-52 1140,-30 1150,-42 1158,-15 1166,-22 1172,0 1178,8 1187,-50 1193,-5 1198,20 1208,-5 1216,26 1222,0 1228,-45 1236,-68 1244,-85 1252,-60 1258,-38 1270,-80 1274,0",
  t10: "91,0 95,-72 102,-55 110,-38 122,-38 135,-32 146,-20 155,-18 160,0 166,8 172,-10 178,-32 186,-8 198,-10 208,-15 216,-28 226,-36 236,-42 244,-35 254,-12 266,-10 274,-25 282,-45 294,-35 302,-38 310,-26 318,-38 328,-28 340,-38 350,-37 358,-25 364,-4 370,4 376,-12 384,-28 394,-18 402,-5 410,8 420,20 430,18 440,30 448,12 456,2 467,2 472,205 489,205 489,-203 499,-203 501,0 503,205 508,205 511,-22 515,60 519,195 524,100 528,-100 532,-203 536,-120 540,-70 545,-203 557,-203 560,-40 565,8 569,-60 573,-150 577,-203 582,-185 587,-145 592,-190 598,-203 621,-203 625,-110 628,-38 632,-110 637,-203 655,-203 662,-142 667,-203 696,-203 700,-20 704,42 709,0 714,-120 718,-203 728,-203 731,0 735,180 738,205 742,120 747,0 751,-60 757,-117 761,-30 764,80 768,205 780,205 786,110 794,5 800,60 808,115 814,130 819,157 825,140 831,70 838,45 845,18 851,80 856,170 863,198 869,160 877,155 884,125 889,160 893,205 907,205 914,100 919,0 925,-33 930,60 937,152 944,110 952,105 964,80 974,130 984,160 992,120 1002,65 1014,108 1020,40 1027,0 1036,20 1042,12 1048,60 1054,102 1062,50 1070,28 1080,45 1088,70 1096,140 1102,70 1109,10 1117,42 1122,0 1127,-50 1133,-65 1140,-52 1149,-70 1158,-32 1168,-38 1176,5 1187,-40 1196,0 1206,-15 1216,30 1224,0 1234,-10 1247,-25 1258,15 1271,22 1274,0",
};

const ORIGIN = 383;
const MID = 68;

function wavePath(data: string, step: number, offset: number) {
  const pts = data.split(" ").map((p) => {
    const [x, v] = p.split(",").map(Number);
    const level = Math.abs(v) >= 203 ? Math.sign(v) * 220 : v;
    return `${(ORIGIN + x * step - offset).toFixed(1)} ${(MID + 0.5 - level / 3).toFixed(1)}`;
  });
  return `M${pts.join("L")}Z`;
}

type ClipProps = {
  look?: "plain" | "tinted" | "selected";
  start?: number;
  width?: number;
  wave?: string;
  step?: number;
  name?: string;
  spike?: boolean;
};

const Clip = ({ look = "plain", start = 0, width, wave, step = 1 / 3, name, spike }: ClipProps) => {
  const selected = look === "selected";
  return (
    <ClipBox $look={look} $w={width}>
      <Canvas $h={135} shapeRendering="crispEdges">
        {ticks.filter((t) => t.x > start).map((t) => (
          <rect key={t.x} x={t.x - start} y={0} width={1} height={135} fill={selected ? "#27264f" : t.major ? "#626365" : c.grid} />
        ))}
        {wave && <path d={wavePath(wave, step, start)} fill={selected ? c.clip : "#4f5052"} stroke={selected ? "none" : "#000"} />}
        <rect x={0} y={MID} width="100%" height={selected ? 2 : 1} fill={selected ? c.clip : "#000"} />
        {selected && <path d="M5.500 12v120" stroke="#8c8ca0" strokeDasharray="1 1" />}
        {spike && <g><rect x={536} width={3} height={MID} fill="#101112" /><rect x={537} width={1} height={MID} fill="#4f5052" /></g>}
      </Canvas>
      {name && <ClipName $selected={selected}>{name}</ClipName>}
    </ClipBox>
  );
};

const LaneTicks = () => (
  <Canvas $h={144} shapeRendering="crispEdges">
    {ticks.map((t) => (
      <rect key={t.x} x={t.x} y={0} width={1} height={144} fill={t.major ? "#7b8287" : t.mid ? "#5b646a" : "#38424b"} />
    ))}
    <rect x={0} y={2} width="100%" height={1} fill="#434c54" />
  </Canvas>
);

const Ruler = () => (
  <RulerBar>
    <Canvas $h={25} shapeRendering="crispEdges">
      {ticks.map((t) => (
        <rect key={t.x} x={t.x} y={0} width={1} height={t.major ? 24 : 9} fill={t.major ? "#fff" : t.mid ? "#d5ccff" : "#9c8bf0"} />
      ))}
      {labels.map((l, i) => (
        <text key={l} x={Math.round(-33 + i * GRID * 5) + 4} y={21} fill="#f1eeff" fontFamily="Open Sans, sans-serif" fontSize={11}>{l}</text>
      ))}
    </Canvas>
  </RulerBar>
);

/* ---------- data ---------- */

const menu = ["File", "Edit", "Project", "Audio", "MIDI", "Scores", "Media", "Transport", "Studio", "Workspaces", "Window", "VST Cloud", "Hub", "Help"];

const status: [string, string, number, boolean?][] = [
  ["Audio Inputs", "Connected", 158],
  ["Audio Outputs", "Connected", 167],
  ["Control Room", "Not Connected", 181, true],
  ["Max. Record Time", "80 hours 05 mins", 213],
  ["Record Format", "44.1 kHz - 32 bit float", 219],
  ["Project Frame Rate", "30 fps", 158],
  ["Project Pan Law", "Equal Power", 172],
];

const info: [string, string, number, "left" | "center" | "right" | "split"][] = [
  ["File", "impulse1samp...mple_3sec)-10", 165, "left"],
  ["Description", "impulse1sample...sample_3sec)-10", 196, "center"],
  ["Start", "0:00:51.437", 98, "right"],
  ["End", "0:00:51.461", 98, "right"],
  ["Length", "0:00:00.023", 98, "right"],
  ["Snap", "0:00:51.461", 98, "right"],
  ["Fade-In", "0:00:00.000", 100, "right"],
  ["Fade-Out", "0:00:00.000", 100, "right"],
  ["Volume", "0.00", 98, "split"],
  ["Invert Phase", "Off", 98, "center"],
  ["Lock", "-", 100, "center"],
  ["Transpose", "0", 100, "center"],
  ["Fine-Tune", "0", 100, "center"],
  ["Mute", "-", 98, "center"],
  ["Musical Mode", "-", 98, "center"],
  ["Algorithm", "élastique Pro - Time", 140, "center"],
  ["Extension", "-", 140, "center"],
];

const sections: [string, string][] = [
  ["Track Versions", "versions"], ["Chords", "chords"], ["Equalizers", "eq"], ["Inserts", "insert"], ["Sends", "send"],
  ["Direct Routing", "routing"], ["Fader", "fader"], ["Notepad", "notepad"], ["Strip", "insert"], ["Cue Sends", "cue"],
  ["Surround Pan", "surround"], ["Device Panel", "device"], ["Quick Controls", "quick"],
];

const tracks = [
  { n: 4, name: "NadIR", selected: true },
  { n: 5, name: "NadIR рендер при -0,02 мс TrackDelay" },
  { n: 6, name: "NadIR рендер при 0мс TrackDelay" },
  { n: 7, name: "NadIR рендер при -0,01 мс TrackDelay" },
  { n: 8, name: "NadIR рендер при 0,01 мс TrackDelay" },
  { n: 9, name: "NadIR рендер при 0,03 мс TrackDelay", boxed: true },
  { n: 10, name: "NadIR рендер при 0,02 мс TrackDelay", boxed: true },
];

const EVENT = "impulse 1sample (Impulse_1sample_3sec)-10";

/* ---------- parts ---------- */

const IconCell = ({ icon, label, fill, split }: { icon: string; label: string; fill?: string; split?: boolean }) => (
  <Cell aria-label={label} $fill={fill} $split={split}><Icon name={icon} size={15} /></Cell>
);

const TrackRow = ({ n, name, selected, boxed }: { n: number; name: string; selected?: boolean; boxed?: boolean }) => {
  const look = selected ? "light" : "dark";
  return (
    <Row>
      <Rail><Icon name="wave" size={18} />{n}</Rail>
      <RowBody $selected={selected}>
        <Cells $look={look}><Cell $split>m</Cell><Cell $split>S</Cell></Cells>
        <Name $boxed={boxed}>{name}{boxed && <Tri dir="down" size={8} />}</Name>
        <Controls>
          <Sized $look={look} $w={48}>
            <IconCell icon="rec" label="Record" fill={selected ? "linear-gradient(#d4494f, #b93038)" : undefined} />
            <IconCell icon="mon" label="Monitor" />
          </Sized>
          <Sized $look={look} $w={51}><IconCell icon="e" label="Edit" /><IconCell icon="ring" label="Instrument" /></Sized>
          <Sized $look={look} $w={48}><Cell>R</Cell><Cell>W</Cell></Sized>
          <Sized $look={look} $w={23}><IconCell icon="lanes" label="Lanes" /></Sized>
        </Controls>
        <Controls>
          <Sized $look={look} $w={73}>
            <IconCell icon="chIns" label="Inserts" fill={selected ? c.accent : undefined} />
            <IconCell icon="chEq" label="Equalizer" />
            <IconCell icon="chSend" label="Sends" />
          </Sized>
          <Sized $look={look} $w={23}><IconCell icon="lock" label="Lock" /></Sized>
        </Controls>
        <Picture $selected={selected} />
      </RowBody>
    </Row>
  );
};

const TopTools = () => (
  <Toolbar>
    <Group><T icon="undo" label="Undo" /><T icon="redo" label="Redo" /></Group>
    <Group><T icon="clock" label="History" /></Group>
    <Spacer />
    <Group>
      <T icon="diamond" label="Inspector" /><T icon="tree" label="Zones" /><T icon="mixer" label="Mixer" />
      <T icon="spread" label="Constrain" /><T icon="ffwd" label="Skip" />
    </Group>
    <Group $dark>
      <Pick label="Configurations" value="Configurations" width={124} />
      <T icon="home" label="Home" $tone="dark" $notch /><T icon="list" label="List" $tone="dark" $notch />
    </Group>
    <Group>
      <Tool $tone="mute">M</Tool><Tool>S</Tool><Tool $tone="dim">L</Tool><Tool>R</Tool><Tool>W</Tool><Tool>A</Tool>
    </Group>
    <Group>
      <T icon="metro" label="Automation" $tone="on" />
      <Pick label="Automation mode" value="Touch" width={100} />
      <T icon="e" label="Automation panel" />
    </Group>
    <Group $dark><T icon="autoscroll" label="Auto-scroll" $tone="grey" /><Tool aria-label="Scroll options"><Tri dir="down" size={8} /></Tool></Group>
    <Group><T icon="locL" label="Left locator" $notch /><Position aria-label="Left position" defaultValue="25.  3.  3.  50" /></Group>
    <Group><T icon="locR" label="Right locator" $notch /><Position aria-label="Right position" defaultValue="27.  1.  2.  90" /></Group>
    <Group>
      <Tool $w={13} aria-label="Tools">
        <svg width="8" height="12" viewBox="0 0 8 12"><path d="M2 2h5M2 4h5M2 8h5M2 10h5" stroke="#fff" strokeWidth="1.500" /></svg>
      </Tool>
      <T icon="pointer" label="Select" $tone="on" $notch />
      <T icon="range" label="Range" /><T icon="pencil" label="Draw" /><T icon="eraser" label="Erase" /><T icon="scissors" label="Split" />
      <T icon="glue" label="Glue" /><T icon="cross" label="Mute tool" /><T icon="zoomin" label="Zoom" /><T icon="hand" label="Comp" />
      <T icon="comp" label="Time warp" $notch /><T icon="lineTool" label="Line" $notch /><T icon="speaker" label="Play" $notch /><T icon="fill" label="Color" />
    </Group>
    <Group $dark><T icon="palette" label="Color menu" /><Tool $w={19} aria-label="Color options"><Tri dir="down" size={8} /></Tool></Group>
    <Group><T icon="snap" label="Snap" $tone="on" /></Group>
    <Group><T icon="star" label="Snap type" /><Pick label="Snap mode" value="Grid" width={113} /></Group>
    <Group $dark><T icon="hash" label="Grid type" $tone="dark" size={16} /><Pick label="Grid value" value="1000 ms" width={113} pad={1} /></Group>
    <Group>
      <T icon="q" label="Quantize" /><Pick label="Quantize value" value="1/16" width={124} />
      <T icon="iter" label="Iterative" /><T icon="warp" label="Warp" /><T icon="e" label="Quantize panel" />
    </Group>
    <Group><T icon="list" label="More" /></Group>
  </Toolbar>
);

const InspectorPanel = () => (
  <Inspector>
    <Tabs><Tab $active>Inspector</Tab><Tab>Visibility</Tab><TabMenu aria-label="Tab menu">=</TabMenu></Tabs>
    <InspectorBody>
      <TrackHead>
        <HeadButton aria-label="Collapse"><Tri dir="down" size={9} /></HeadButton>
        <HeadName>NadIR<Tri dir="right" size={6} /></HeadName>
        <HeadButton aria-label="Edit channel"><Icon name="e" size={19} /></HeadButton>
      </TrackHead>
      <Strip>
        <StripShape width="149" height="49" viewBox="0 0 149 49"><path d="M4 0h141q4 0 4 4v32q0 4-4 4H48C36 42 26 49 14 49 5 49 0 42 0 33V4q0-4 4-4z" fill="#b3c7de" /></StripShape>
        <StripCol>
          <Cells $look="blue"><Cell $split>m</Cell><Cell $split>S</Cell></Cells>
          <Rounds><Round $rec aria-label="Record enable"><Icon name="rec" size={20} /></Round><Round aria-label="Monitor"><Icon name="mon" size={14} /></Round></Rounds>
        </StripCol>
        <StripCol>
          <Cells $look="blue"><Cell>R</Cell><Cell>W</Cell><IconCell icon="grid4" label="Lanes" /><IconCell icon="xfade" label="Crossfade" fill={c.accent} /></Cells>
          <Cells $look="blue"><IconCell icon="note" label="Time base" fill="#dfa75d" /><IconCell icon="lock" label="Lock" /><IconCell icon="lanes" label="Show lanes" /><IconCell icon="freeze" label="Freeze" /></Cells>
        </StripCol>
      </Strip>
      <Faders>
        <FaderIcons><Icon name="volume" /><Icon name="pan" /><Icon name="delay" size={20} /></FaderIcons>
        <FaderBox>
          <FaderRow>0.00<Slider type="range" $filled defaultValue={78} /></FaderRow>
          <FaderRow $center>C<Slider type="range" defaultValue={50} /></FaderRow>
          <FaderRow>-0.02<Slider type="range" defaultValue={50} /></FaderRow>
        </FaderBox>
      </Faders>
      <Routing>
        <Route $dim><Icon name="preset" size={12} /><span>No Track Preset</span><Icon name="reload" size={12} /></Route>
        <Route><Icon name="inPort" size={12} /><span>Talkback</span></Route>
        <Route><Icon name="outPort" size={12} /><span>Stereo Out</span></Route>
      </Routing>
      <Sections>
        {sections.map(([name, icon]) => (
          <Section key={name}>
            <SectionName><Tri dir="right" size={9} /><span>{name}</span>{name === "Device Panel" && <Tri dir="down" size={6} />}</SectionName>
            <SectionIcon aria-label={`${name} state`} $on={name === "Inserts"}><Icon name={icon} size={16} /></SectionIcon>
          </Section>
        ))}
        <Gear aria-label="Inspector setup"><Icon name="gear" size={14} /></Gear>
      </Sections>
    </InspectorBody>
  </Inspector>
);

export default function App() {
  return (
    <Page>
      <Global />
      <MenuBar>
        <Menu>
          <Logo width="19" height="19" viewBox="0 0 19 19" aria-hidden="true">
            <path d="M14 0h5v19H9z" fill="#e3e3e3" />
            <path d="M11 1v5L7 9.500l4 3.500v5L2 9.500z" fill="#b3142c" />
            <circle cx="13.500" cy="9.500" r="2.500" fill="#b3142c" />
          </Logo>
          {menu.map((m) => <MenuItem key={m}>{m}</MenuItem>)}
        </Menu>
        <Title>Cubase Pro Project - 02_NDSP_CAB_IR_test_01</Title>
      </MenuBar>
      <TopTools />
      <StatusLine>
        {status.map(([k, v, w, warn]) => (
          <Status key={k} $w={w} $warn={warn}><span>{k}</span><b>{v}</b></Status>
        ))}
      </StatusLine>
      <InfoLine>
        {info.map(([k, v, w, align]) => (
          <Info key={k} $w={w} $align={align}>{k}<p>{v}{align === "split" && <small>dB</small>}</p></Info>
        ))}
      </InfoLine>
      <Overview>
        <svg width="32" height="28" viewBox="0 0 32 28" shapeRendering="crispEdges" aria-hidden="true">
          <path d="M4 0h17v2H4zM4 4h17v1H4zM4 15h17v1H4zM14 18h4v2h-4zM14 22h4v2h-4zM14 26h4v1h-4z" fill="#8d8f92" />
          <path d="M25 0h4v28h-4z" fill="#5a5b5e" />
          <path d="M25 4h4v2h-4zM25 8h4v2h-4zM25 12h4v1h-4z" fill="#b9babc" />
        </svg>
      </Overview>
      <Main>
        <InspectorPanel />
        <Workspace>
          <TrackList>
            <ListHead>
              <HeadGroup><T icon="plus" label="Add track" size={17} /><T icon="addPreset" label="Add from preset" size={17} /></HeadGroup>
              <HeadGroup $dark><Count>23 / 23</Count><T icon="home" label="Find tracks" size={17} /><T icon="list" label="Track controls" size={17} /></HeadGroup>
              <HeadGroup><T icon="search" label="Search" size={17} /></HeadGroup>
            </ListHead>
            <Row $first>
              <Rail><Icon name="markerTrack" size={18} /></Rail>
              <RowBody>
                <Cells $look="dark"><IconCell icon="marker" label="Add marker" split /><IconCell icon="markers" label="Add cycle marker" split /></Cells>
                <Name>Markers</Name>
                <Controls>
                  {["Locate", "Cycle", "Zoom"].map((l) => <Sized key={l} $look="dark" $w={48}><MarkerButton>{l}</MarkerButton></Sized>)}
                  <Sized $look="dark" $w={23}><IconCell icon="lock" label="Lock markers" /></Sized>
                </Controls>
              </RowBody>
            </Row>
            {tracks.map((t) => <TrackRow key={t.n} {...t} />)}
          </TrackList>
          <Timeline>
            <Ruler />
            <MarkerLane><LaneTicks /></MarkerLane>
            <Lane><Clip spike /></Lane>
            <Lane><Clip wave={waves.t5} /></Lane>
            <Lane>
              <Clip width={407} />
              <Clip look="selected" start={408} width={803} wave={waves.t6} name={EVENT} />
              <Clip start={1210} name={EVENT} />
            </Lane>
            <Lane><Clip wave={waves.t7} step={1 / 1.867} /></Lane>
            <Lane><Clip wave={waves.t8} step={1 / 1.867} /></Lane>
            <Lane><Clip look="tinted" wave={waves.t9} /></Lane>
            <Lane><Clip wave={waves.t10} /></Lane>
          </Timeline>
        </Workspace>
      </Main>
      <Arrow width="1100" height="670" viewBox="0 0 1100 670" aria-hidden="true">
        <g style={{ filter: "drop-shadow(2px 3px 2px rgba(0,0,0,.6))" }}>
          <path d="M1083 655 662 148" stroke="#f00" strokeWidth="2" fill="none" />
          <path d="M652 136 669 147 663 149 661 154z" fill="#f00" stroke="#f00" strokeWidth="2" />
        </g>
      </Arrow>
    </Page>
  );
}
